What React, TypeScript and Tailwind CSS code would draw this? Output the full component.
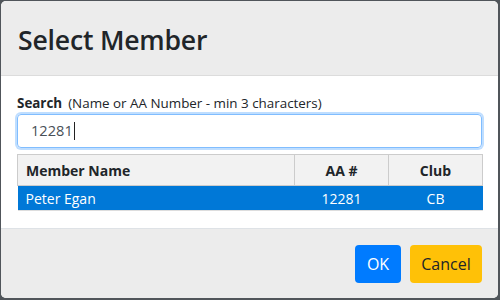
import React from "react";

export default function App() {
  const font = { fontFamily: '"Open Sans", "Noto Sans", sans-serif' };
  return (
    <div className="w-[500px] h-[300px] bg-[#50555a] pt-[1px] pl-[1px] overflow-hidden" style={font}>
      <div className="w-[497px] h-[297px] rounded-[5px] overflow-hidden flex flex-col bg-white">
        <div className="h-[75px] bg-[#ececec] border-b border-[#dcdcdc] flex items-center px-[17px] pt-[4px]">
          <h1 className="text-[26.6px] font-semibold text-[#212529] leading-none tracking-[-0.2px]">Select Member</h1>
        </div>
        <div className="h-[153px] bg-white px-4 pt-[17px] border-b border-[#dee2e6]">
          <div className="text-[13.4px] leading-[20px] text-[#212529]">
            <span className="font-bold">Search</span>
            <span className="ml-[6px]">(Name or AA Number - min 3 characters)</span>
          </div>
          <div className="mt-[1px] h-[34px] border border-[#80bdff] rounded-[4px] shadow-[0_0_0_2px_rgba(0,123,255,0.25)] flex items-center px-[13px] text-[14.6px] text-[#495057]">
            12281<span className="inline-block w-[1px] h-[18px] bg-[#222] ml-[1px]"></span>
          </div>
          <table className="mt-[6px] w-[466px] border-collapse text-[14px]">
            <thead>
              <tr className="bg-[#f2f2f2] h-[31px]">
                <th className="border border-[#cccccc] text-left font-bold px-[8px] text-[#212529] w-[277px]">Member Name</th>
                <th className="border border-[#cccccc] text-center font-bold text-[#212529] w-[94px]">AA #</th>
                <th className="border border-[#cccccc] text-center font-bold text-[#212529]">Club</th>
              </tr>
            </thead>
            <tbody>
              <tr className="bg-[#0078d7] text-white h-[25px] border-b border-[#dddddd]">
                <td className="px-[8px]">Peter Egan</td>
                <td className="text-center">12281</td>
                <td className="text-center">CB</td>
              </tr>
            </tbody>
          </table>
        </div>
        <div className="flex-1 bg-[#ececec] flex justify-end items-start pt-[16px] pr-[16px] gap-[9px]">
          <button className="h-[38px] w-[46px] rounded-[4px] bg-[#007bff] text-white text-[16px]">OK</button>
          <button className="h-[38px] w-[72px] rounded-[4px] bg-[#ffc107] text-[#212529] text-[16px]">Cancel</button>
        </div>
      </div>
    </div>
  );
}
